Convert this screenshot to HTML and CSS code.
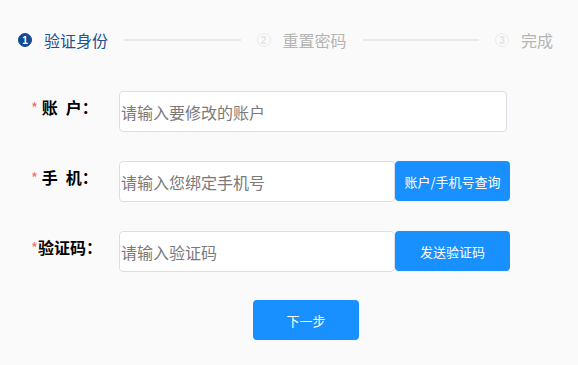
FILE: index.html
```html
<!DOCTYPE html>
<html lang="zh-CN">
<head>
    <meta charset="UTF-8">
    <meta name="viewport" content="width=device-width, initial-scale=1.0">
    <title>找回密码</title>
    <link rel="stylesheet" href="styles.css">
</head>
<body>
    <div class="steps">
        <div class="step active">
            <span class="num">1</span>
            <span class="title">验证身份</span>
        </div>
        <div class="line"></div>
        <div class="step">
            <span class="num">2</span>
            <span class="title">重置密码</span>
        </div>
        <div class="line"></div>
        <div class="step">
            <span class="num">3</span>
            <span class="title">完成</span>
        </div>
    </div>

    <div class="form">
        <div class="row">
            <label class="label"><i>*</i> 账&ensp;户：</label>
            <input class="input long" type="text" placeholder="请输入要修改的账户">
        </div>
        <div class="row">
            <label class="label"><i>*</i> 手&ensp;机：</label>
            <input class="input" type="text" placeholder="请输入您绑定手机号">
            <button class="btn side">账户/手机号查询</button>
        </div>
        <div class="row">
            <label class="label"><i>*</i>验证码：</label>
            <input class="input" type="text" placeholder="请输入验证码">
            <button class="btn side">发送验证码</button>
        </div>
        <div class="next">
            <button class="btn next-btn">下一步</button>
        </div>
    </div>
</body>
</html>
```

FILE: styles.css
```css
* {
    box-sizing: border-box;
}

body {
    margin: 0;
    background-color: #fafafa;
    font-family: "Noto Sans CJK SC", "Liberation Sans", sans-serif;
}

/* 步骤条 */
.steps {
    display: flex;
    align-items: center;
    height: 80px;
    padding: 0 25px 0 18px;
}

.step {
    display: flex;
    align-items: center;
}

.step .num {
    display: flex;
    align-items: center;
    justify-content: center;
    width: 14px;
    height: 14px;
    margin-right: 12px;
    border: 1.5px solid #ebebeb;
    border-radius: 50%;
    color: #e3e3e3;
    font-family: "Liberation Sans", sans-serif;
    font-size: 10px;
    font-weight: bold;
}

.step .title {
    color: #b4b4b4;
    font-size: 16px;
    line-height: 20px;
}

.step.active .num {
    border-color: #124a93;
    background-color: #124a93;
    color: #fff;
}

.step.active .title {
    color: #1c4f95;
}

.line {
    flex: 1;
    height: 2px;
    margin: 0 16px;
    background-color: #e9e9e9;
}

/* 表单 */
.form {
    padding-top: 11px;
}

.row {
    display: flex;
    align-items: flex-start;
    height: 41px;
    margin-bottom: 29px;
}

.label {
    width: 119px;
    padding-left: 31px;
    color: #000;
    font-size: 16px;
    font-weight: bold;
    line-height: 32px;
    white-space: nowrap;
}

.label i {
    color: #f56c6c;
    font-style: normal;
    font-weight: normal;
    font-size: 15px;
}

.input {
    width: 276px;
    height: 41px;
    padding: 0 1px;
    border: 1px solid #dcdde8;
    border-radius: 4px;
    background-color: #fff;
    font-family: inherit;
    font-size: 16px;
    outline: none;
}

.input::placeholder {
    color: #7a7a7a;
}

.input.long {
    width: 388px;
}

.btn {
    height: 40px;
    border: none;
    border-radius: 4px;
    background-color: #1890ff;
    color: #fff;
    font-family: inherit;
    font-size: 13px;
    cursor: pointer;
}

.btn.side {
    width: 115px;
    padding: 0;
}

.next {
    padding-left: 253px;
    margin-top: -1px;
}

.next-btn {
    width: 106px;
}
```
